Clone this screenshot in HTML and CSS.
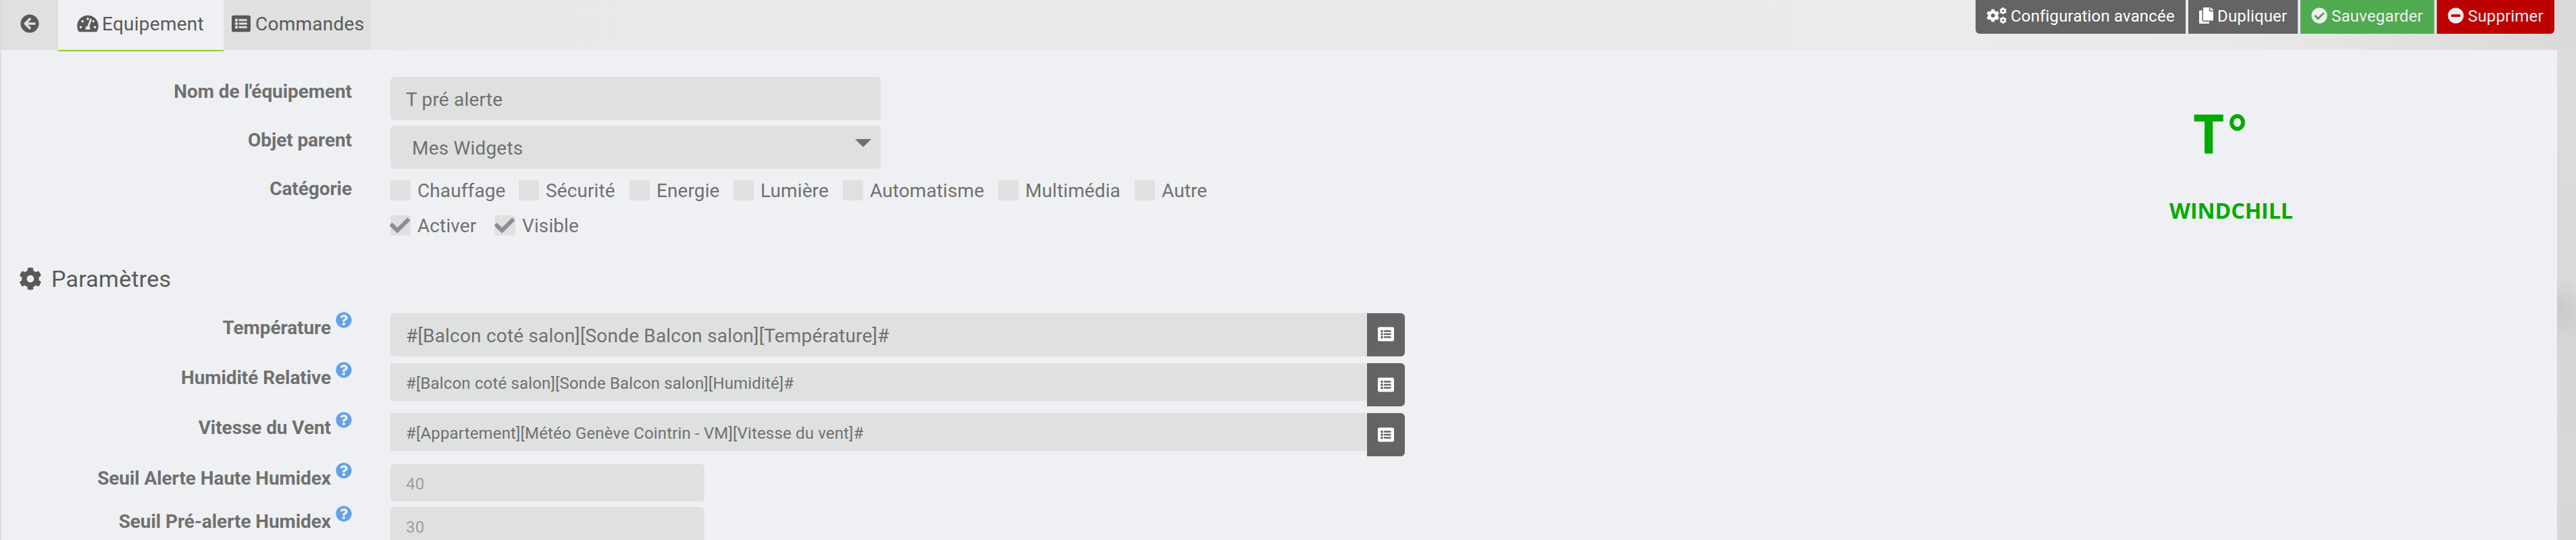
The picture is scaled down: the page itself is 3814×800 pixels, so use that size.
FILE: index.html
```
<!DOCTYPE html>
<html lang="fr">
<head>
<meta charset="utf-8">
<title>Equipement</title>
<link rel="stylesheet" href="styles.css">
</head>
<body>
<svg class="sprite" aria-hidden="true">
  <symbol id="back" viewBox="0 0 512 512"><path d="M256 504C119 504 8 393 8 256S119 8 256 8s248 111 248 248-111 248-248 248zm28.900-143.600L209.400 288H392c13.300 0 24-10.700 24-24v-16c0-13.300-10.700-24-24-24H209.400l75.500-72.400c9.700-9.300 9.900-24.800.4-34.300l-11-10.900c-9.400-9.400-24.600-9.400-33.900 0L107.700 239c-9.400 9.400-9.400 24.600 0 33.900l132.700 132.700c9.400 9.400 24.600 9.400 33.900 0l11-10.900c9.500-9.500 9.300-25-.4-34.300z"/></symbol>
  <symbol id="gauge" viewBox="0 0 576 512"><path d="M288 32C128.940 32 0 160.940 0 320c0 52.800 14.250 102.260 39.060 144.800 5.610 9.620 16.300 15.200 27.440 15.200h443c11.140 0 21.830-5.580 27.440-15.200C561.750 422.260 576 372.800 576 320c0-159.060-128.940-288-288-288zm0 64c14.710 0 26.580 10.130 30.320 23.650-1.110 2.260-2.640 4.230-3.450 6.670l-9.220 27.670c-5.130 3.490-10.970 6.010-17.640 6.010-17.670 0-32-14.330-32-32S270.330 96 288 96zM96 384c-17.670 0-32-14.330-32-32s14.330-32 32-32 32 14.330 32 32-14.330 32-32 32zm48-160c-17.670 0-32-14.330-32-32s14.330-32 32-32 32 14.330 32 32-14.330 32-32 32zm246.770-72.410l-61.330 184C343.130 347.330 352 364.540 352 384c0 11.720-3.380 22.550-8.880 32H232.880c-5.500-9.450-8.880-20.280-8.880-32 0-33.940 26.500-61.430 59.900-63.590l61.340-184.010c4.170-12.560 17.730-19.450 30.360-15.170 12.570 4.190 19.350 17.790 15.170 30.360zm14.660 57.200l15.520-46.550c3.470-1.290 7.130-2.230 11.050-2.230 17.670 0 32 14.330 32 32s-14.330 32-32 32c-11.380-.01-20.890-6.280-26.570-15.220zM480 384c-17.670 0-32-14.330-32-32s14.330-32 32-32 32 14.330 32 32-14.330 32-32 32z"/></symbol>
  <symbol id="list" viewBox="0 0 512 512"><path fill-rule="evenodd" d="M464 480H48c-26.510 0-48-21.490-48-48V80c0-26.510 21.490-48 48-48h416c26.510 0 48 21.490 48 48v352c0 26.510-21.490 48-48 48zM128 120a40 40 0 1 0 0 80 40 40 0 1 0 0-80zm0 96a40 40 0 1 0 0 80 40 40 0 1 0 0-80zm0 96a40 40 0 1 0 0 80 40 40 0 1 0 0-80zM204 132a12 12 0 0 0-12 12v32a12 12 0 0 0 12 12h200a12 12 0 0 0 12-12v-32a12 12 0 0 0-12-12zm0 96a12 12 0 0 0-12 12v32a12 12 0 0 0 12 12h200a12 12 0 0 0 12-12v-32a12 12 0 0 0-12-12zm0 96a12 12 0 0 0-12 12v32a12 12 0 0 0 12 12h200a12 12 0 0 0 12-12v-32a12 12 0 0 0-12-12z"/></symbol>
  <symbol id="cog" viewBox="0 0 512 512"><path d="M487.400 315.700l-42.600-24.600c4.300-23.200 4.300-47 0-70.200l42.600-24.600c4.900-2.800 7.100-8.600 5.500-14-11.100-35.600-30-67.800-54.700-94.600-3.800-4.100-10-5.100-14.800-2.300L380.800 110c-17.900-15.400-38.500-27.300-60.800-35.100V25.800c0-5.600-3.900-10.500-9.400-11.700-36.700-8.200-74.300-7.800-109.200 0-5.500 1.200-9.400 6.100-9.400 11.700V75c-22.200 7.900-42.800 19.800-60.800 35.100L88.700 85.500c-4.900-2.800-11-1.900-14.800 2.300-24.700 26.700-43.600 58.900-54.700 94.600-1.700 5.400.6 11.200 5.500 14L67.300 221c-4.300 23.200-4.300 47 0 70.200l-42.600 24.600c-4.900 2.800-7.100 8.600-5.500 14 11.100 35.600 30 67.800 54.700 94.600 3.800 4.100 10 5.100 14.800 2.300l42.600-24.600c17.900 15.400 38.500 27.300 60.800 35.100v49.200c0 5.600 3.900 10.500 9.400 11.700 36.700 8.200 74.300 7.800 109.200 0 5.500-1.200 9.400-6.100 9.400-11.700v-49.200c22.200-7.900 42.800-19.800 60.800-35.100l42.600 24.600c4.900 2.800 11 1.900 14.800-2.300 24.700-26.700 43.600-58.900 54.700-94.600 1.500-5.500-.7-11.300-5.600-14.100zM256 336c-44.100 0-80-35.900-80-80s35.900-80 80-80 80 35.900 80 80-35.900 80-80 80z"/></symbol>
  <symbol id="cogs" viewBox="0 0 640 512"><use href="#cog" x="-8" y="48" width="430" height="416"/><use href="#cog" x="412" y="-4" width="232" height="226"/><use href="#cog" x="412" y="290" width="232" height="226"/></symbol>
  <symbol id="copy" viewBox="0 0 448 512"><path d="M320 448v40c0 13.255-10.745 24-24 24H24c-13.255 0-24-10.745-24-24V120c0-13.255 10.745-24 24-24h72v296c0 30.879 25.121 56 56 56h168zm0-344V0H152c-13.255 0-24 10.745-24 24v368c0 13.255 10.745 24 24 24h272c13.255 0 24-10.745 24-24V128H344c-13.200 0-24-10.800-24-24zm120.971-31.029L375.029 7.029A24 24 0 0 0 358.059 0H352v96h96v-6.059a24 24 0 0 0-7.029-16.970z"/></symbol>
  <symbol id="ok" viewBox="0 0 512 512"><path d="M504 256c0 136.967-111.033 248-248 248S8 392.967 8 256 119.033 8 256 8s248 111.033 248 248zM227.314 387.314l184-184c6.248-6.248 6.248-16.379 0-22.627l-22.627-22.627c-6.248-6.249-16.379-6.249-22.628 0L216 308.118l-70.059-70.059c-6.248-6.248-16.379-6.248-22.628 0l-22.627 22.627c-6.248 6.248-6.248 16.379 0 22.627l104 104c6.249 6.249 16.379 6.249 22.628.001z"/></symbol>
  <symbol id="minus" viewBox="0 0 512 512"><path d="M256 8C119 8 8 119 8 256s111 248 248 248 248-111 248-248S393 8 256 8zM124 296c-6.600 0-12-5.400-12-12v-56c0-6.600 5.400-12 12-12h264c6.600 0 12 5.400 12 12v56c0 6.600-5.400 12-12 12H124z"/></symbol>
  <symbol id="help" viewBox="0 0 512 512"><path d="M504 256c0 136.997-111.043 248-248 248S8 392.997 8 256C8 119.083 119.043 8 256 8s248 111.083 248 248zM262.655 90c-54.497 0-89.255 22.957-116.549 63.758-3.536 5.286-2.353 12.415 2.715 16.258l34.699 26.310c5.205 3.947 12.621 3.008 16.665-2.122 17.864-22.658 30.113-35.797 57.303-35.797 20.429 0 45.698 13.148 45.698 32.958 0 14.976-12.363 22.667-32.534 33.976C247.128 238.528 216 254.941 216 296v4c0 6.627 5.373 12 12 12h56c6.627 0 12-5.373 12-12v-1.333c0-28.462 83.186-29.647 83.186-106.667 0-58.002-60.165-102-116.531-102zM256 338c-25.365 0-46 20.635-46 46 0 25.364 20.635 46 46 46s46-20.636 46-46c0-25.365-20.635-46-46-46z"/></symbol>
  <symbol id="check" viewBox="0 0 512 512"><path d="M173.898 439.404l-166.400-166.400c-9.997-9.997-9.997-26.206 0-36.204l36.203-36.204c9.997-9.998 26.207-9.998 36.204 0L192 312.690 432.095 72.596c9.997-9.997 26.207-9.997 36.204 0l36.203 36.204c9.997 9.997 9.997 26.206 0 36.204l-294.400 294.401c-9.998 9.997-26.207 9.997-36.204-.001z"/></symbol>
</svg>

<header class="topbar">
  <nav class="tabs">
    <a class="tab tab-back"><svg class="i28"><use href="#back"/></svg></a>
    <a class="tab tab-active"><svg class="i32"><use href="#gauge"/></svg><span>Equipement</span></a>
    <a class="tab tab-cmd"><svg class="i28"><use href="#list"/></svg><span>Commandes</span></a>
  </nav>
  <div class="actions">
    <a class="btn btn-config"><svg class="i30"><use href="#cogs"/></svg><span>Configuration avancée</span></a>
    <a class="btn btn-copy"><svg class="i21"><use href="#copy"/></svg><span>Dupliquer</span></a>
    <a class="btn btn-save"><svg class="i24"><use href="#ok"/></svg><span>Sauvegarder</span></a>
    <a class="btn btn-delete"><svg class="i24"><use href="#minus"/></svg><span>Supprimer</span></a>
  </div>
</header>

<main class="panel">
  <section class="form">
    <div class="row"><label class="label">Nom de l'équipement</label><div class="field medium">T pré alerte</div></div>
    <div class="row"><label class="label">Objet parent</label><div class="field medium select"><span>Mes Widgets</span><i class="caret"></i></div></div>
    <div class="row row-checks"><label class="label">Catégorie</label>
      <div class="checks">
        <div class="checkline">
          <span class="check c1"><i class="box"></i>Chauffage</span>
          <span class="check c2"><i class="box"></i>Sécurité</span>
          <span class="check c3"><i class="box"></i>Energie</span>
          <span class="check c4"><i class="box"></i>Lumière</span>
          <span class="check c5"><i class="box"></i>Automatisme</span>
          <span class="check c6"><i class="box"></i>Multimédia</span>
          <span class="check"><i class="box"></i>Autre</span>
        </div>
        <div class="checkline">
          <span class="check c7"><i class="box"><svg><use href="#check"/></svg></i>Activer</span>
          <span class="check"><i class="box"><svg><use href="#check"/></svg></i>Visible</span>
        </div>
      </div>
    </div>
    <h2 class="legend"><svg><use href="#cog"/></svg><span>Paramètres</span></h2>
    <div class="row cmd"><label class="label">Température<svg><use href="#help"/></svg></label><div class="field wide">#[Balcon coté salon][Sonde Balcon salon][Température]#</div><a class="pick"><svg><use href="#list"/></svg></a></div>
    <div class="row cmd"><label class="label">Humidité Relative<svg><use href="#help"/></svg></label><div class="field wide small">#[Balcon coté salon][Sonde Balcon salon][Humidité]#</div><a class="pick low"><svg><use href="#list"/></svg></a></div>
    <div class="row cmd last"><label class="label">Vitesse du Vent<svg><use href="#help"/></svg></label><div class="field wide small">#[Appartement][Météo Genève Cointrin - VM][Vitesse du vent]#</div><a class="pick low"><svg><use href="#list"/></svg></a></div>
    <div class="row threshold"><label class="label">Seuil Alerte Haute Humidex<svg><use href="#help"/></svg></label><div class="field small short">40</div></div>
    <div class="row threshold"><label class="label">Seuil Pré-alerte Humidex<svg><use href="#help"/></svg></label><div class="field small short">30</div></div>
  </section>
  <aside class="logo">
    <div class="temp"><span>T</span><i class="degree"></i></div>
    <div class="name">WINDCHILL</div>
  </aside>
</main>
</body>
</html>
```
FILE: styles.css
```
* { box-sizing: border-box; }
body {
  margin: 0;
  height: 800px;
  overflow: hidden;
  background: linear-gradient(90deg, #dbdcdd 0, #e8e8e8 600px, #ebebeb 2900px, #e8e8e8 3350px, #dcdcdc 3720px, #dadada 100%);
  font: 28px/40px Roboto, sans-serif;
  letter-spacing: 0.1px;
  color: #707070;
}
.sprite { position: absolute; width: 0; height: 0; }
svg { fill: currentColor; flex: none; display: block; }
.i21 { width: 21px; height: 24px; }
.i24 { width: 24px; height: 24px; }
.i28 { width: 28px; height: 28px; }
.i30 { width: 30px; height: 24px; }
.i32 { width: 32px; height: 28px; }

.topbar { display: flex; justify-content: space-between; height: 74px; padding: 0 32px 0 2px; }
.tabs { display: flex; color: #595959; letter-spacing: 0.25px; }
.tab { display: flex; height: 74px; padding-top: 16px; background: #dfe1e0; white-space: nowrap; }
.tab svg { margin-top: 5px; }
.tab-back { width: 84px; padding-left: 28px; }
.tab-active { width: 245px; height: 76px; padding-left: 28px; gap: 5px; background: #eff0f3; border-bottom: 2px solid #96c927; }
.tab-cmd { width: 218px; padding-left: 12px; gap: 7px; }

.actions { display: flex; gap: 4px; letter-spacing: 0.16px; }
.btn { display: flex; gap: 6px; height: 50px; padding: 11px 0 0 16px; background: #646464; color: #fff; font-size: 24px; line-height: 26px; white-space: nowrap; }
.btn-config { width: 311px; border-bottom-left-radius: 6px; }
.btn-copy { width: 162px; }
.btn-save { width: 198px; background: #50aa50; color: #f0f0f0; }
.btn-delete { width: 174px; background: #bd0000; color: #f0f0f0; border-bottom-right-radius: 6px; }

.panel { display: flex; justify-content: space-between; width: 3784px; height: 726px; margin-left: 2px; padding-top: 40px; background: #eff0f3; overflow: hidden; }
.panel::after { content: ""; position: absolute; left: 3786px; top: 74px; width: 28px; height: 726px; background: radial-gradient(ellipse 40px 46px at 4px 382px, #c9c9c9, rgba(201,201,201,0)), linear-gradient(#dcdcdc 0, #dadada 360px, #d4d4d4 400px, #d7d7d7 600px, #d6d6d6 100%); }
.row { display: flex; align-items: flex-start; height: 72px; }
.label { display: flex; justify-content: flex-end; width: 519px; margin: 2px 57px 0 0; font-weight: 700; letter-spacing: -0.08px; white-space: nowrap; }
.label svg { width: 24px; height: 24px; margin: -4px 0 0 7px; color: #62a1ea; }
.field { height: 64px; padding: 2px 24px 0 23px; background: #dfe1e0; border-radius: 6px; line-height: 64px; letter-spacing: 0.19px; white-space: nowrap; }
.medium { width: 726px; }
.select { display: flex; justify-content: space-between; padding: 2px 14px 0 32px; }
.caret { margin-top: 18px; width: 0; height: 0; border: 12px solid transparent; border-top-color: #707070; border-bottom: 0; }
.wide { width: 1446px; border-radius: 6px 0 0 6px; }
.small { height: 56px; font-size: 24px; line-height: 56px; letter-spacing: 0.16px; }
.wide.small { border-radius: 0; }
.short { width: 465px; color: #9f9f9f; }

.row-checks { height: 104px; }
.checks { display: flex; flex-direction: column; gap: 12px; padding-top: 5px; }
.checkline { display: flex; height: 40px; }
.check { display: flex; gap: 10px; white-space: nowrap; }
.box { width: 30px; height: 30px; margin-top: 4px; background: #dfe1e0; }
.box svg { width: 30px; height: 30px; margin-left: -1px; color: #8d8d94; }
.c1 { width: 190px; }
.c2 { width: 164px; }
.c3 { width: 154px; }
.c4 { width: 162px; }
.c5 { width: 230px; }
.c6 { width: 202px; }
.c7 { width: 155px; }

.legend { display: flex; gap: 14px; height: 102px; margin: 0; padding: 29px 0 0 26px; color: #595959; font-size: 34px; line-height: 44px; font-weight: 400; letter-spacing: 0.25px; }
.legend svg { width: 34px; height: 34px; margin-top: 5px; }

.cmd { height: 74px; }
.cmd.last { height: 75px; }
.threshold { height: 64px; }
.pick { width: 56px; height: 64px; padding: 19px 0 0 16px; background: #646464; color: #fff; border-radius: 0 6px 6px 0; }
.pick.low { padding-top: 20px; }
.pick svg { width: 24px; height: 24px; }

.logo { width: 576px; color: #00ab00; font-family: "Open Sans", sans-serif; font-weight: 700; letter-spacing: 0; }
.temp { display: flex; height: 150px; padding: 28px 0 0 37px; font-size: 80px; line-height: 110px; }
.degree { width: 23px; height: 25px; margin: 27px 0 0 8px; border: 6px solid #00ab00; border-radius: 50%; }
.name { padding-left: 2px; font-size: 32px; line-height: 96px; }
```
